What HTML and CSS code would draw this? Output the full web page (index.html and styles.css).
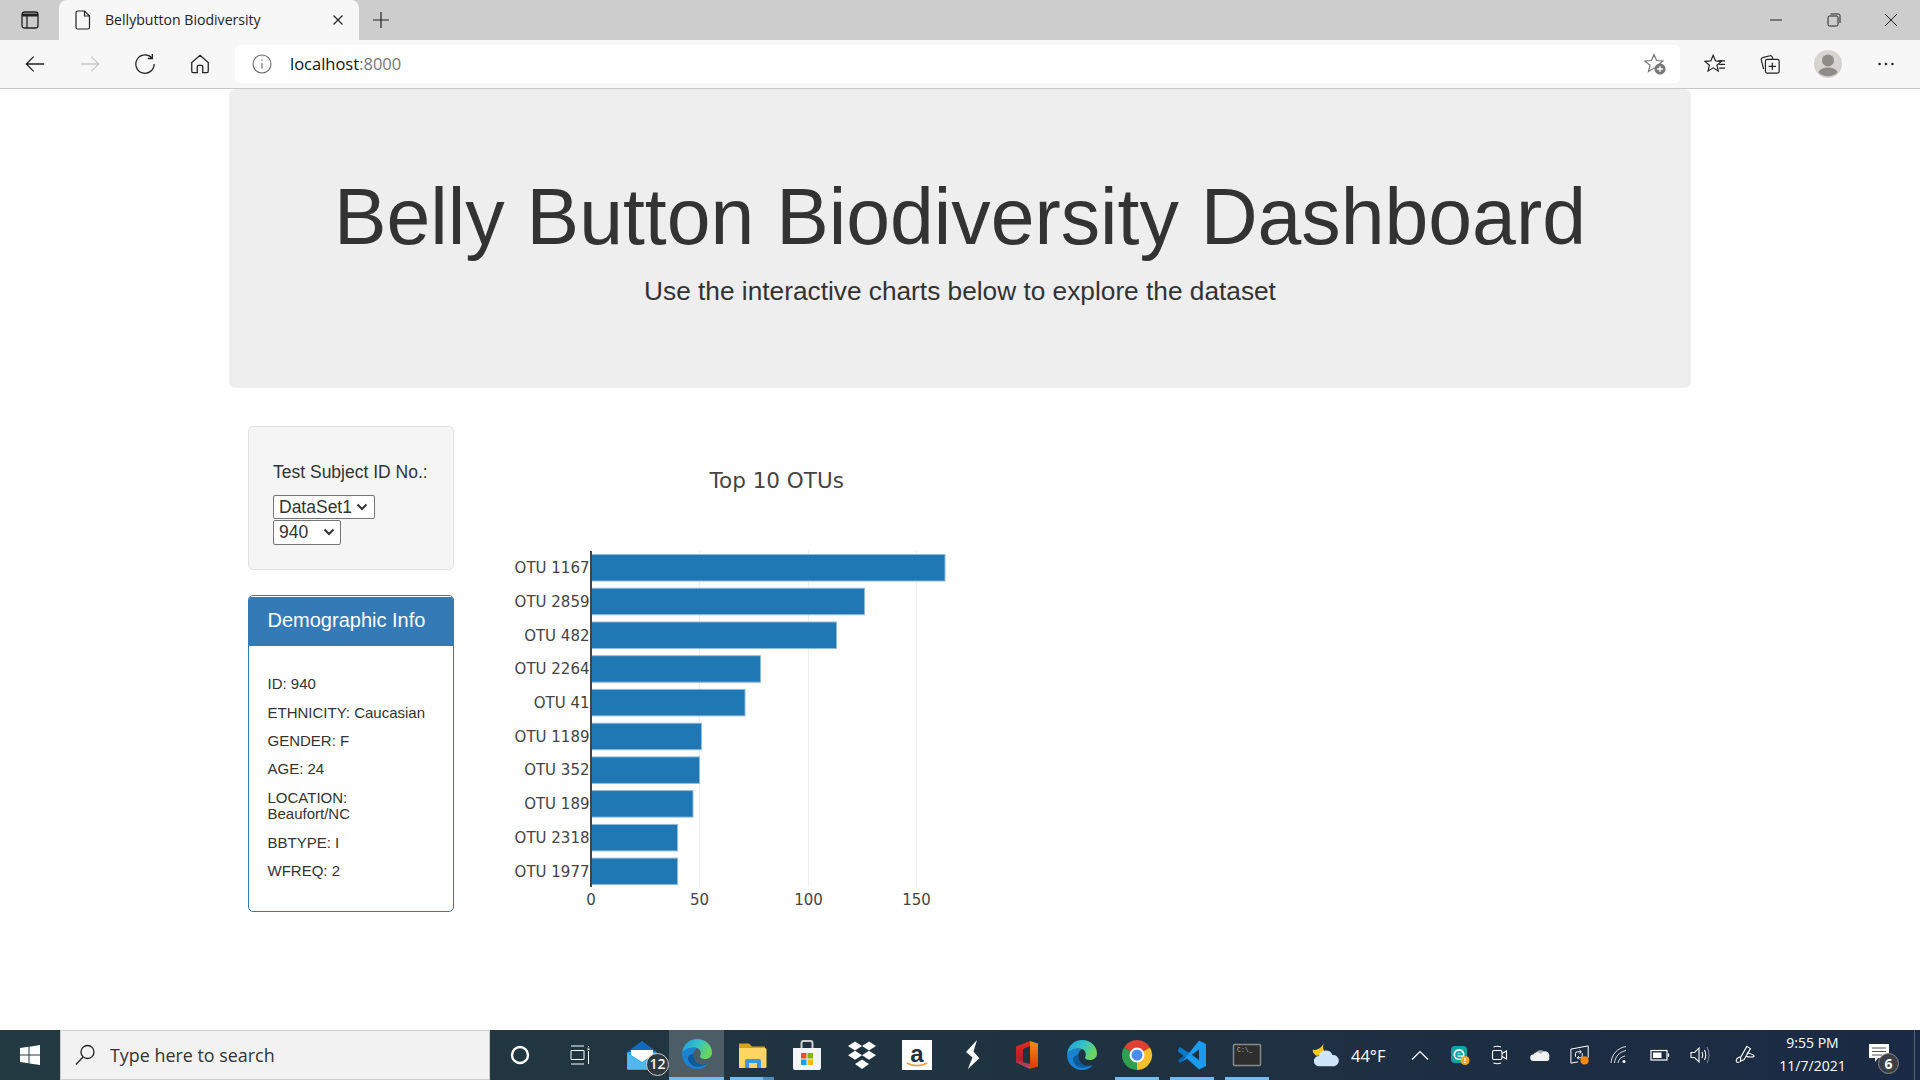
FILE: index.html
```html
<!DOCTYPE html>
<html lang="en">
<head>
    <meta charset="UTF-8">
    <title>Bellybutton Biodiversity</title>
    <link rel="stylesheet" href="styles.css">
</head>
<body>
    <svg class="defs" width="0" height="0">
        <defs>
            <linearGradient id="edge-top" x1="0" y1="0" x2="1" y2="0.4">
                <stop offset="0" stop-color="#1b9de2"/>
                <stop offset="0.55" stop-color="#35c1c8"/>
                <stop offset="1" stop-color="#6ad65f"/>
            </linearGradient>
            <linearGradient id="office-left" x1="0" y1="0" x2="0" y2="1">
                <stop offset="0" stop-color="#e02b20"/>
                <stop offset="0.65" stop-color="#b3202a"/>
                <stop offset="1" stop-color="#c0527a"/>
            </linearGradient>
            <linearGradient id="office-right" x1="0" y1="0" x2="0" y2="1">
                <stop offset="0" stop-color="#f58a1f"/>
                <stop offset="1" stop-color="#d83b01"/>
            </linearGradient>
            <symbol id="edge" viewBox="0 0 32 32">
                <path fill="#1a82d0" d="M1 15c-.5 9 6.500 16 15 16 4.500 0 8-1.500 11-5-3 1.500-6 1.500-8.500.5C14.500 25 11 21 12 16c.5-2.500 2-5 4-6-6-1.500-13 1-15 5z"/>
                <path fill="#0f5a9d" d="M7 21c1 5 6 8.500 11 7.500 3.500-.5 6-1.500 9-3.500-3 1.500-6 2-8.500 1C15 25 12 21 12.500 16 9 16 7 18 7 21z"/>
                <path fill="url(#edge-top)" d="M1 15C2 7 8 1 16 1c8.500 0 15 6 15 13.500 0 4-3 6.500-7 6.500-2.500 0-5-.8-5-2.500 0-.8.8-1.300.8-3C19.800 11.500 16.500 9.500 13 9.500 7 9.500 2.500 12 1 15z"/>
            </symbol>
        </defs>
    </svg>

    <header class="chrome">
        <div class="tabstrip">
            <svg class="tab-toggle" viewBox="0 0 18 18" fill="none" stroke="#222" stroke-width="1.300">
                <rect x="1" y="1" width="16" height="16" rx="2.500"/>
                <path d="M1 4h16" stroke-width="3"/>
                <path d="M6 5v12"/>
            </svg>
            <div class="tab">
                <svg class="tab-icon" viewBox="0 0 16 20" fill="none" stroke="#222" stroke-width="1.200">
                    <path d="M2.500 1h7l5 5v11.500a1.500 1.500 0 0 1-1.500 1.500H2.500A1.500 1.500 0 0 1 1 17.500v-15A1.500 1.500 0 0 1 2.500 1z"/>
                    <path d="M9.500 1v5h5"/>
                </svg>
                <span class="tab-title">Bellybutton Biodiversity</span>
                <svg class="tab-close" viewBox="0 0 12 12" fill="none" stroke="#222" stroke-width="1.200">
                    <path d="M1.500 1.500l9 9M10.500 1.500l-9 9"/>
                </svg>
            </div>
            <svg class="tab-new" viewBox="0 0 18 18" fill="none" stroke="#222" stroke-width="1.200">
                <path d="M9 1v16M1 9h16"/>
            </svg>
            <div class="window-btns">
                <svg class="win-btn" viewBox="0 0 14 14" fill="none" stroke="#222" stroke-width="1"><path d="M1 7h12"/></svg>
                <svg class="win-btn" viewBox="0 0 14 14" fill="none" stroke="#222" stroke-width="1"><rect x="1" y="3" width="10" height="10" rx="1.500"/><path d="M3.500 1H11.500a1.500 1.500 0 0 1 1.500 1.500V10"/></svg>
                <svg class="win-btn" viewBox="0 0 14 14" fill="none" stroke="#222" stroke-width="1"><path d="M1 1l12 12M13 1L1 13"/></svg>
            </div>
        </div>
        <div class="toolbar">
            <div class="tool"><svg class="tool-icon" viewBox="0 0 24 24" fill="none" stroke="#222" stroke-width="1.400"><path d="M22 12H2.500M10.500 4l-8 8 8 8"/></svg></div>
            <div class="tool"><svg class="tool-icon" viewBox="0 0 24 24" fill="none" stroke="#c9c9c9" stroke-width="1.400"><path d="M2 12h19.500M13.500 4l8 8-8 8"/></svg></div>
            <div class="tool"><svg class="tool-icon" viewBox="0 0 24 24" fill="none" stroke="#222" stroke-width="1.400"><path d="M19.500 5.500A10 10 0 1 0 22 12"/><path d="M20 1v5h-5"/></svg></div>
            <div class="tool"><svg class="tool-icon" viewBox="0 0 24 24" fill="none" stroke="#222" stroke-width="1.400"><path d="M12 2.500l9 8V20a1.500 1.500 0 0 1-1.500 1.500H15V15a1.500 1.500 0 0 0-1.500-1.500h-3A1.500 1.500 0 0 0 9 15v6.500H4.500A1.500 1.500 0 0 1 3 20v-9.500z"/></svg></div>
            <div class="address">
                <svg class="address-info" viewBox="0 0 20 20" fill="none" stroke="#666" stroke-width="1.100">
                    <circle cx="10" cy="10" r="9"/>
                    <path d="M10 9v5.500M10 5.500v1.200"/>
                </svg>
                <span class="url">localhost<span class="url-port">:8000</span></span>
                <svg class="address-star" viewBox="0 0 22 22">
                    <path fill="none" stroke="#777" stroke-width="1.200" d="M10 1.500l2.500 6 6.500.5-5 4.200 1.500 6.300-5.500-3.400L4.500 18.500 6 12.200 1 8l6.500-.5z"/>
                    <circle cx="16" cy="16" r="5.500" fill="#777"/>
                    <path stroke="#fff" stroke-width="1.300" d="M16 13v6M13 16h6"/>
                </svg>
            </div>
            <div class="tool-right">
                <svg class="tool-icon" viewBox="0 0 24 24" fill="none" stroke="#222" stroke-width="1.300"><path d="M10 2.500l2.600 6.100 6.400.5-4.900 4.200 1.500 6.300L10 16.200 4.400 19.600l1.500-6.300L1 9.100l6.400-.5z"/><path d="M15.500 8.500H23M16.500 12.500H23M16.500 16.500H23"/></svg>
                <svg class="tool-icon" viewBox="0 0 24 24" fill="none" stroke="#222" stroke-width="1.300"><path d="M5 17.500L2.500 7.500A2 2 0 0 1 4 5l8-2a2 2 0 0 1 2.500 1.500l.5 2"/><rect x="7" y="7" width="15" height="15" rx="2"/><path d="M14.500 10.500v8M10.500 14.500h8"/></svg>
                <svg class="avatar" viewBox="0 0 28 28">
                    <circle cx="14" cy="14" r="14" fill="#d6d4d0"/>
                    <circle cx="14" cy="10.500" r="6" fill="#8f8c88"/>
                    <path fill="#8f8c88" d="M4.500 22.500c1-3.500 5-5 9.500-5s8.500 1.500 9.500 5a14 14 0 0 1-19 0z"/>
                </svg>
                <svg class="tool-icon" viewBox="0 0 24 24" fill="#222"><circle cx="5" cy="12" r="1.400"/><circle cx="12" cy="12" r="1.400"/><circle cx="19" cy="12" r="1.400"/></svg>
            </div>
        </div>
    </header>

    <main class="page">
        <div class="jumbotron">
            <h1>Belly Button Biodiversity Dashboard</h1>
            <p>Use the interactive charts below to explore the dataset</p>
        </div>
        <div class="row">
            <div class="side">
                <div class="well">
                    <h5>Test Subject ID No.:</h5>
                    <select class="picker picker-wide"><option>DataSet1</option></select>
                    <select class="picker picker-narrow"><option>940</option></select>
                </div>
                <div class="panel">
                    <div class="panel-heading">Demographic Info</div>
                    <div class="panel-body">
                        <h6>ID: 940</h6>
                        <h6>ETHNICITY: Caucasian</h6>
                        <h6>GENDER: F</h6>
                        <h6>AGE: 24</h6>
                        <h6>LOCATION: Beaufort/NC</h6>
                        <h6>BBTYPE: I</h6>
                        <h6>WFREQ: 2</h6>
                    </div>
                </div>
            </div>
            <svg class="chart" viewBox="490 450 480 480">
                <text class="chart-title" x="776.700" y="487.500">Top 10 OTUs</text>
                <path class="grid" d="M699.500 551V887M808.500 551V887M916.500 551V887"/>
                <g class="bars">
                    <rect x="591" y="554.500" width="354" height="26.500"/>
                    <rect x="591" y="588.200" width="273.500" height="26.500"/>
                    <rect x="591" y="622" width="245.500" height="26.500"/>
                    <rect x="591" y="655.700" width="169.500" height="26.500"/>
                    <rect x="591" y="689.400" width="154" height="26.500"/>
                    <rect x="591" y="723.200" width="110.500" height="26.500"/>
                    <rect x="591" y="756.900" width="108.500" height="26.500"/>
                    <rect x="591" y="790.600" width="102" height="26.500"/>
                    <rect x="591" y="824.400" width="86.500" height="26.500"/>
                    <rect x="591" y="858.100" width="86.500" height="26.500"/>
                </g>
                <path class="axis" d="M591 551V887"/>
                <g class="y-labels">
                    <text x="589.500" y="573">OTU 1167</text>
                    <text x="589.500" y="606.800">OTU 2859</text>
                    <text x="589.500" y="640.500">OTU 482</text>
                    <text x="589.500" y="674.200">OTU 2264</text>
                    <text x="589.500" y="708">OTU 41</text>
                    <text x="589.500" y="741.700">OTU 1189</text>
                    <text x="589.500" y="775.400">OTU 352</text>
                    <text x="589.500" y="809.200">OTU 189</text>
                    <text x="589.500" y="842.900">OTU 2318</text>
                    <text x="589.500" y="876.600">OTU 1977</text>
                </g>
                <g class="x-labels">
                    <text x="591" y="904.500">0</text>
                    <text x="699.500" y="904.500">50</text>
                    <text x="808.500" y="904.500">100</text>
                    <text x="916.500" y="904.500">150</text>
                </g>
            </svg>
        </div>
    </main>

    <footer class="taskbar">
        <div class="start">
            <svg class="start-logo" viewBox="0 0 20 20" fill="#fff"><path d="M0 3l8.500-1.200V9.500H0zM9.500 1.700L20 0v9.500H9.500zM0 10.500h8.500v7.700L0 17zM9.500 10.500H20V20L9.500 18.400z"/></svg>
        </div>
        <div class="search">
            <svg class="search-icon" viewBox="0 0 22 22" fill="none" stroke="#222" stroke-width="1.300"><circle cx="13.500" cy="8" r="6.500"/><path d="M9 13L2 20.500"/></svg>
            <span>Type here to search</span>
        </div>
        <div class="task-btn">
            <svg class="cortana" viewBox="0 0 20 20" fill="none" stroke="#fff" stroke-width="2.400"><circle cx="10" cy="10" r="8"/></svg>
        </div>
        <div class="task-btn">
            <svg class="taskview" viewBox="0 0 22 22" fill="none" stroke="#fff" stroke-width="1"><path d="M2 2h13M2 20h13M2 6.500h13v9H2zM19.500 2v1.500M19.500 7v13"/><path d="M19.500 4.500v1.500" stroke-width="2"/></svg>
        </div>
        <div class="apps">
            <div class="app">
                <svg class="app-icon" viewBox="0 0 32 32">
                    <path fill="#0f6cbd" d="M1 13L16 2l15 11v4H1z"/>
                    <rect x="1" y="13" width="30" height="18" rx="1.500" fill="#28a8ea"/>
                    <path fill="#fff" d="M5 11h22v5l-11 7-11-7z"/>
                    <path fill="#50b8ef" d="M1 14l15 10 15-10v16H1z"/>
                </svg>
                <span class="app-badge">12</span>
            </div>
            <div class="app app-active"><svg class="app-icon"><use href="#edge"/></svg></div>
            <div class="app app-open app-group">
                <svg class="app-icon" viewBox="0 0 32 32">
                    <path fill="#d9a21b" d="M3 4.500h10l3 3h13v6H3z"/>
                    <path fill="#ffd561" d="M3 9h26a1.500 1.500 0 0 1 1.500 1.500v17A1.500 1.500 0 0 1 29 29H3z"/>
                    <path fill="#3a96dd" d="M9 22a2 2 0 0 1 2-2h12a2 2 0 0 1 2 2v7h-4v-5h-8v5H9z"/>
                </svg>
            </div>
            <div class="app">
                <svg class="app-icon" viewBox="0 0 32 32">
                    <path fill="none" stroke="#cfcfcf" stroke-width="2" d="M10.500 9V4a2 2 0 0 1 2-2h7a2 2 0 0 1 2 2v5"/>
                    <path fill="#f4f4f4" d="M2 9h28v20a2 2 0 0 1-2 2H4a2 2 0 0 1-2-2z"/>
                    <rect x="10" y="14" width="5.500" height="5.500" fill="#f25022"/>
                    <rect x="16.500" y="14" width="5.500" height="5.500" fill="#7fba00"/>
                    <rect x="10" y="20.500" width="5.500" height="5.500" fill="#00a4ef"/>
                    <rect x="16.500" y="20.500" width="5.500" height="5.500" fill="#ffb900"/>
                </svg>
            </div>
            <div class="app">
                <svg class="app-icon" viewBox="0 0 32 32" fill="#fff">
                    <path d="M9 2.500l7 4.500-7 4.500L2 7z"/>
                    <path d="M23 2.500l7 4.500-7 4.500L16 7z"/>
                    <path d="M9 11.800l7 4.500-7 4.500-7-4.500z"/>
                    <path d="M23 11.800l7 4.500-7 4.500-7-4.500z"/>
                    <path d="M16 20.500l7 4.500-7 5-7-5z"/>
                </svg>
            </div>
            <div class="app">
                <svg class="app-icon" viewBox="0 0 32 32">
                    <rect x="1" y="1" width="30" height="30" fill="#fff"/>
                    <text class="amazon-a" x="16" y="23">a</text>
                    <path fill="none" stroke="#f79c34" stroke-width="1.800" d="M6 24c6 3.500 14 3.500 20 0"/>
                </svg>
            </div>
            <div class="app">
                <svg class="app-icon" viewBox="0 0 32 32" fill="#fff"><path d="M21 1L10 13l6.500 5.500L11.700 30.300 23.300 19.300 17.500 12.500z"/></svg>
            </div>
            <div class="app">
                <svg class="app-icon" viewBox="0 0 32 32">
                    <path fill="url(#office-left)" d="M19 2L5 7.500v16l14 6.500v-5l-7-2V10l7-3z"/>
                    <path fill="url(#office-right)" d="M19 2l8 2.500v23L19 30z"/>
                </svg>
            </div>
            <div class="app"><svg class="app-icon"><use href="#edge"/></svg></div>
            <div class="app app-open">
                <svg class="app-icon" viewBox="0 0 32 32">
                    <path fill="#e03f33" d="M16 16L3 8.500A15 15 0 0 1 29 8.500z"/>
                    <path fill="#2fa04f" d="M16 16v15A15 15 0 0 1 3 8.500z"/>
                    <path fill="#f6c12b" d="M16 16l13-7.500A15 15 0 0 1 16 31z"/>
                    <circle cx="16" cy="16" r="7.500" fill="#fff"/>
                    <circle cx="16" cy="16" r="5.500" fill="#4a8cf0"/>
                </svg>
            </div>
            <div class="app app-open">
                <svg class="app-icon" viewBox="0 0 32 32">
                    <path fill="#0065a9" d="M2 21.500L12 12.500l4 3.500L4 24z"/>
                    <path fill="#0a78c8" d="M4 8L2 10.500v2L19 26l4-5z"/>
                    <path fill="#1a9bf0" d="M23 1.500l7 3.500v22l-7 3.500L10.500 19 16 16l7 5.500v-11L6 23z"/>
                </svg>
            </div>
            <div class="app app-open">
                <svg class="app-icon" viewBox="0 0 32 32">
                    <rect x="2.500" y="5.500" width="27" height="21" rx="1" fill="#2e2e2e" stroke="#8a8a8a" stroke-width="1.500"/>
                    <text class="cmd-text" x="6" y="13">C:\_</text>
                </svg>
            </div>
        </div>
        <div class="tray">
            <div class="weather">
                <svg class="weather-icon" viewBox="0 0 30 30">
                    <path fill="#f8c61c" d="M13 2c-2 4-1 8 1 10l-9 4C1 13 .5 11 1 9c3 2 9-1 12-7z"/>
                    <path fill="#cfe6f8" d="M8 27a5.500 5.500 0 0 1-1-11 8 8 0 0 1 15-1 6 6 0 0 1 1.500 12z"/>
                </svg>
                <span>44°F</span>
            </div>
            <div class="tray-item"><svg class="tray-icon" viewBox="0 0 20 20" fill="none" stroke="#fff" stroke-width="1.200"><path d="M2 14.500l8-8 8 8"/></svg></div>
            <div class="tray-item">
                <svg class="tray-icon" viewBox="0 0 20 20">
                    <rect x="1" y="1" width="16" height="17" rx="4" fill="#10a3a5"/>
                    <circle cx="9" cy="9.500" r="5.500" fill="#fff"/>
                    <path fill="none" stroke="#10a3a5" stroke-width="1.800" d="M6 9.500h6a3 3 0 1 0-1 2.500"/>
                    <circle cx="15" cy="15.500" r="4.500" fill="#f7a823"/>
                    <path stroke="#fff" stroke-width="1.300" d="M15 13v3M15 17v1"/>
                </svg>
            </div>
            <div class="tray-item">
                <svg class="tray-icon" viewBox="0 0 20 20" fill="none" stroke="#fff" stroke-width="1.100">
                    <rect x="2.500" y="5.500" width="9.500" height="9" rx="1.500"/>
                    <path d="M12 8.500l4.500-2.500v8L12 11.500M3.500 2c2.500-1 5-1 7.500 0M3.500 18c2.500 1 5 1 7.500 0"/>
                </svg>
            </div>
            <div class="tray-item">
                <svg class="tray-icon" viewBox="0 0 22 20">
                    <path fill="#a9adb2" d="M6 10a6 6 0 0 1 11-2.500A4.500 4.500 0 0 1 19 9L10 13z"/>
                    <path fill="#f2f2f2" d="M4 16.500a3.500 3.500 0 0 1-.5-7A5 5 0 0 1 12 9a4 4 0 0 1 9 3.500 3 3 0 0 1-2 4z"/>
                </svg>
            </div>
            <div class="tray-item">
                <svg class="tray-icon" viewBox="0 0 22 22" fill="none" stroke="#fff" stroke-width="1.100">
                    <path d="M1 4.500L20 1v13M1 4.500V20l8-1.500"/>
                    <path d="M6 13V9.500a2 2 0 0 1 2-2h4M10.500 5.500l2 2-2 2M13.500 9v3a2 2 0 0 1-2 2H8M10 12l-2 2 2 2"/>
                    <circle cx="16" cy="17" r="4.500" fill="#f7890f" stroke="none"/>
                </svg>
            </div>
            <div class="tray-item">
                <svg class="tray-icon" viewBox="0 0 20 20" fill="none" stroke="#fff" stroke-width="1" stroke-opacity=".85">
                    <path d="M1 18C1.500 10 7 3 16 1.500M4.500 18C5 12 9 7 16 5.500M8 18c.5-3.500 3-6 7-7"/>
                    <circle cx="14" cy="16.500" r="1.500" fill="#fff" stroke="none"/>
                </svg>
            </div>
            <div class="tray-item">
                <svg class="tray-icon" viewBox="0 0 20 20" fill="none" stroke="#fff" stroke-width="1.200">
                    <rect x="1" y="5.500" width="16" height="9.500"/>
                    <rect x="3" y="7.500" width="8.500" height="5.500" fill="#fff" stroke="none"/>
                    <path d="M18.500 8.500v3.500"/>
                </svg>
            </div>
            <div class="tray-item">
                <svg class="tray-icon" viewBox="0 0 20 20" fill="none" stroke="#fff" stroke-width="1.100">
                    <path d="M1 7.500h3.500L9 3v14l-4.500-4.500H1z"/>
                    <path d="M12 7c1 2 1 4 0 6M14.500 5c1.500 3 1.500 7 0 10"/>
                    <path d="M17 2c2.500 5 2.500 11 0 16" stroke-opacity=".4"/>
                </svg>
            </div>
            <div class="tray-item tray-pen">
                <svg class="tray-icon" viewBox="0 0 22 22" fill="none" stroke="#fff" stroke-width="1.200">
                    <path d="M13 1.500l4 2.500-7 12-4 2 .3-4.500z"/>
                    <path d="M13 8.500c4 1 8 2 8 3.500s-5 1.500-9 .5M6 13c-3 1-5 3-4.500 5 .4 1.500 2 1.500 3.500.5"/>
                </svg>
            </div>
            <div class="clock"><span>9:55 PM</span><span>11/7/2021</span></div>
            <div class="notify">
                <svg class="notify-icon" viewBox="0 0 20 20">
                    <path fill="#fff" d="M0 0h20v14H9l-3 4v-4H0z"/>
                    <path stroke="#555" stroke-width="1.200" d="M3 4h14M3 7.500h14M3 11h10"/>
                </svg>
                <span class="notify-badge">6</span>
            </div>
            <div class="show-desktop"></div>
        </div>
    </footer>
</body>
</html>
```

FILE: styles.css
```css
* {
    box-sizing: border-box;
}
body {
    margin: 0;
    height: 1080px;
    width: 1920px;
    overflow: hidden;
    display: flex;
    flex-direction: column;
    background-color: #fff;
    color: #333;
    font-family: 'Liberation Sans', Arial, sans-serif;
}
.defs {
    position: absolute;
}

/* browser frame */
.chrome {
    flex: none;
    font-family: 'Open Sans', 'Noto Sans', sans-serif;
}
.tabstrip {
    display: flex;
    align-items: center;
    height: 40px;
    background-color: #cdcdcd;
}
.tab-toggle {
    width: 18px;
    height: 18px;
    margin: 0 20px 0 21px;
}
.tab {
    display: flex;
    align-items: center;
    width: 300px;
    height: 40px;
    padding: 0 15px 0 16px;
    background-color: #f7f7f7;
    border-radius: 8px 8px 0 0;
}
.tab-icon {
    width: 16px;
    height: 20px;
}
.tab-title {
    flex: 1;
    margin: 0 0 2px 14px;
    font-size: 14.100px;
    color: #222;
}
.tab-close {
    width: 12px;
    height: 12px;
}
.tab-new {
    width: 18px;
    height: 18px;
    margin-left: 13px;
}
.window-btns {
    display: flex;
    gap: 43.500px;
    margin-left: auto;
    margin-right: 22px;
}
.win-btn {
    width: 14px;
    height: 14px;
}
.toolbar {
    display: flex;
    align-items: center;
    height: 49px;
    padding: 0 23px 1px 7.500px;
    background-color: #f7f7f7;
    border-bottom: 1px solid #c6c6c6;
}
.tool {
    display: flex;
    justify-content: center;
    width: 55px;
}
.tool-icon {
    width: 22px;
    height: 22px;
}
.address {
    flex: 1;
    display: flex;
    align-items: center;
    height: 38px;
    margin-left: 7.500px;
    padding: 0 14px 0 17px;
    background-color: #fff;
    border-radius: 5px;
}
.address-info {
    width: 20px;
    height: 20px;
}
.url {
    margin-left: 18px;
    font-size: 16.500px;
    color: #111;
}
.url-port {
    color: #767676;
}
.address-star {
    width: 22px;
    height: 22px;
    margin-left: auto;
}
.tool-right {
    display: flex;
    align-items: center;
    gap: 33px;
    margin-left: 24px;
}
.avatar {
    width: 28px;
    height: 28px;
}

/* page */
.page {
    flex: 1;
    width: 1462px;
    margin: 0 auto;
}
.jumbotron {
    padding: 60px 0 62px;
    margin-bottom: 38.500px;
    background-color: #eee;
    border-radius: 7px;
    text-align: center;
}
.jumbotron h1 {
    margin: 25px 0 12.500px;
    font-size: 78.750px;
    font-weight: 400;
    line-height: 1.1;
}
.jumbotron p {
    margin: 0 0 15px;
    font-size: 26.250px;
    line-height: 37.500px;
}
.row {
    display: flex;
    padding-left: 19px;
}
.side {
    width: 206px;
}
.well {
    height: 144px;
    padding: 23px 24px;
    margin-bottom: 25px;
    background-color: #f5f5f5;
    border: 1px solid #e3e3e3;
    border-radius: 5px;
}
.well h5 {
    margin: 12px 0 13px;
    font-size: 17.500px;
    font-weight: 400;
    line-height: 20px;
    white-space: nowrap;
}
.picker {
    display: block;
    height: 24px;
    padding: 0 0 0 5px;
    font-family: inherit;
    font-size: 17.500px;
    color: #333;
    background-color: #fff;
    background-image: url("data:image/svg+xml,%3Csvg xmlns='http://www.w3.org/2000/svg' viewBox='0 0 12 8'%3E%3Cpath d='M1.500 1.500L6 6l4.500-4.500' fill='none' stroke='%23333' stroke-width='2'/%3E%3C/svg%3E");
    background-repeat: no-repeat;
    background-size: 12px 8px;
    border: 1px solid #767676;
    border-radius: 2px;
    appearance: none;
}
.picker-wide {
    width: 102px;
    margin-bottom: 1px;
    background-position: right 6px center;
}
.picker-narrow {
    width: 68px;
    height: 24.500px;
    background-position: right 5px center;
}
.panel {
    height: 317px;
    background-color: #fff;
    border: 1px solid #337ab7;
    border-radius: 5px;
    overflow: hidden;
}
.panel-heading {
    height: 49px;
    padding: 10px 18.500px;
    margin-top: 1px;
    font-size: 20px;
    line-height: 26px;
    color: #fff;
    background-color: #337ab7;
}
.panel-body {
    padding: 30px 22px 0 18.500px;
}
.panel-body h6 {
    margin: 0 0 11.900px;
    font-size: 15px;
    font-weight: 400;
    line-height: 16.500px;
}

/* chart */
.chart {
    flex: none;
    width: 480px;
    height: 480px;
    margin: 24px 0 0 36px;
    font-family: 'DejaVu Sans', sans-serif;
}
.chart-title {
    font-size: 21.500px;
    text-anchor: middle;
    fill: #444;
}
.grid {
    fill: none;
    stroke: #eee;
    stroke-width: 1;
}
.bars rect {
    fill: #1f77b4;
    stroke: #8fbbdc;
    stroke-width: 1;
}
.axis {
    fill: none;
    stroke: #444;
    stroke-width: 2;
}
.y-labels text {
    font-size: 15px;
    text-anchor: end;
    fill: #444;
}
.x-labels text {
    font-size: 15px;
    text-anchor: middle;
    fill: #444;
}

/* taskbar */
.taskbar {
    flex: none;
    display: flex;
    height: 50px;
    color: #fff;
    font-family: 'Open Sans', 'Noto Sans', sans-serif;
    background: linear-gradient(to right, #233a42, #1f3340 50%, #1b2a44);
}
.start {
    display: flex;
    justify-content: center;
    align-items: center;
    width: 60px;
}
.start-logo {
    width: 20px;
    height: 20px;
}
.search {
    display: flex;
    align-items: center;
    width: 430px;
    padding-left: 13px;
    font-size: 17.900px;
    color: #333;
    background-color: #f2f2f2;
    border: 1px solid #ccc;
}
.search-icon {
    width: 22px;
    height: 22px;
    margin-right: 14px;
}
.task-btn {
    display: flex;
    justify-content: center;
    align-items: center;
    width: 60px;
}
.cortana {
    width: 20px;
    height: 20px;
}
.taskview {
    width: 22px;
    height: 22px;
}
.apps {
    display: flex;
    margin-left: 4px;
}
.app {
    position: relative;
    display: flex;
    justify-content: center;
    align-items: center;
    width: 55px;
    height: 50px;
}
.app-icon {
    width: 32px;
    height: 32px;
}
.app-active {
    background-color: rgba(255, 255, 255, .2);
    border-bottom: 3px solid #76b9ed;
}
.app-open::after {
    content: '';
    position: absolute;
    left: 5.500px;
    right: 5.500px;
    bottom: 0;
    height: 3px;
    background-color: #76b9ed;
}
.app-group::before {
    content: '';
    position: absolute;
    right: 5.500px;
    bottom: 0;
    z-index: 1;
    width: 11px;
    height: 3px;
    background-color: #4f8bb8;
}
.app-badge {
    position: absolute;
    left: 32px;
    top: 23px;
    width: 23px;
    height: 23px;
    font-size: 14px;
    line-height: 20px;
    font-weight: 600;
    text-align: center;
    background-color: #2e3a40;
    border: 1.500px solid #cfcfcf;
    border-radius: 50%;
}
.amazon-a {
    font-family: 'Liberation Sans', sans-serif;
    font-size: 24px;
    font-weight: 700;
    text-anchor: middle;
    fill: #232f3e;
}
.cmd-text {
    font-family: 'Liberation Mono', monospace;
    font-size: 6.500px;
    fill: #b5b5b5;
}
.tray {
    display: flex;
    margin-left: auto;
}
.weather {
    display: flex;
    align-items: center;
    gap: 11px;
    width: 94px;
    padding-left: 6px;
    font-size: 16.500px;
}
.weather-icon {
    width: 28px;
    height: 28px;
}
.tray-item {
    display: flex;
    justify-content: center;
    align-items: center;
    width: 40px;
}
.tray-pen {
    width: 50px;
}
.tray-icon {
    width: 20px;
    height: 20px;
}
.clock {
    display: flex;
    flex-direction: column;
    align-items: center;
    gap: 6px;
    width: 85px;
    padding-top: 4px;
    font-size: 14px;
    line-height: 17px;
}
.notify {
    position: relative;
    width: 50px;
}
.notify-icon {
    position: absolute;
    left: 14px;
    top: 14px;
    width: 20px;
    height: 20px;
}
.notify-badge {
    position: absolute;
    left: 23px;
    top: 23px;
    width: 21px;
    height: 21px;
    font-size: 14px;
    font-weight: 700;
    line-height: 19px;
    text-align: center;
    background-color: #3c4046;
    border: 1px solid #888;
    border-radius: 50%;
}
.show-desktop {
    width: 15px;
    background: linear-gradient(to right, transparent 9px, #55606e 9px, #55606e 10px, transparent 10px);
}
```
